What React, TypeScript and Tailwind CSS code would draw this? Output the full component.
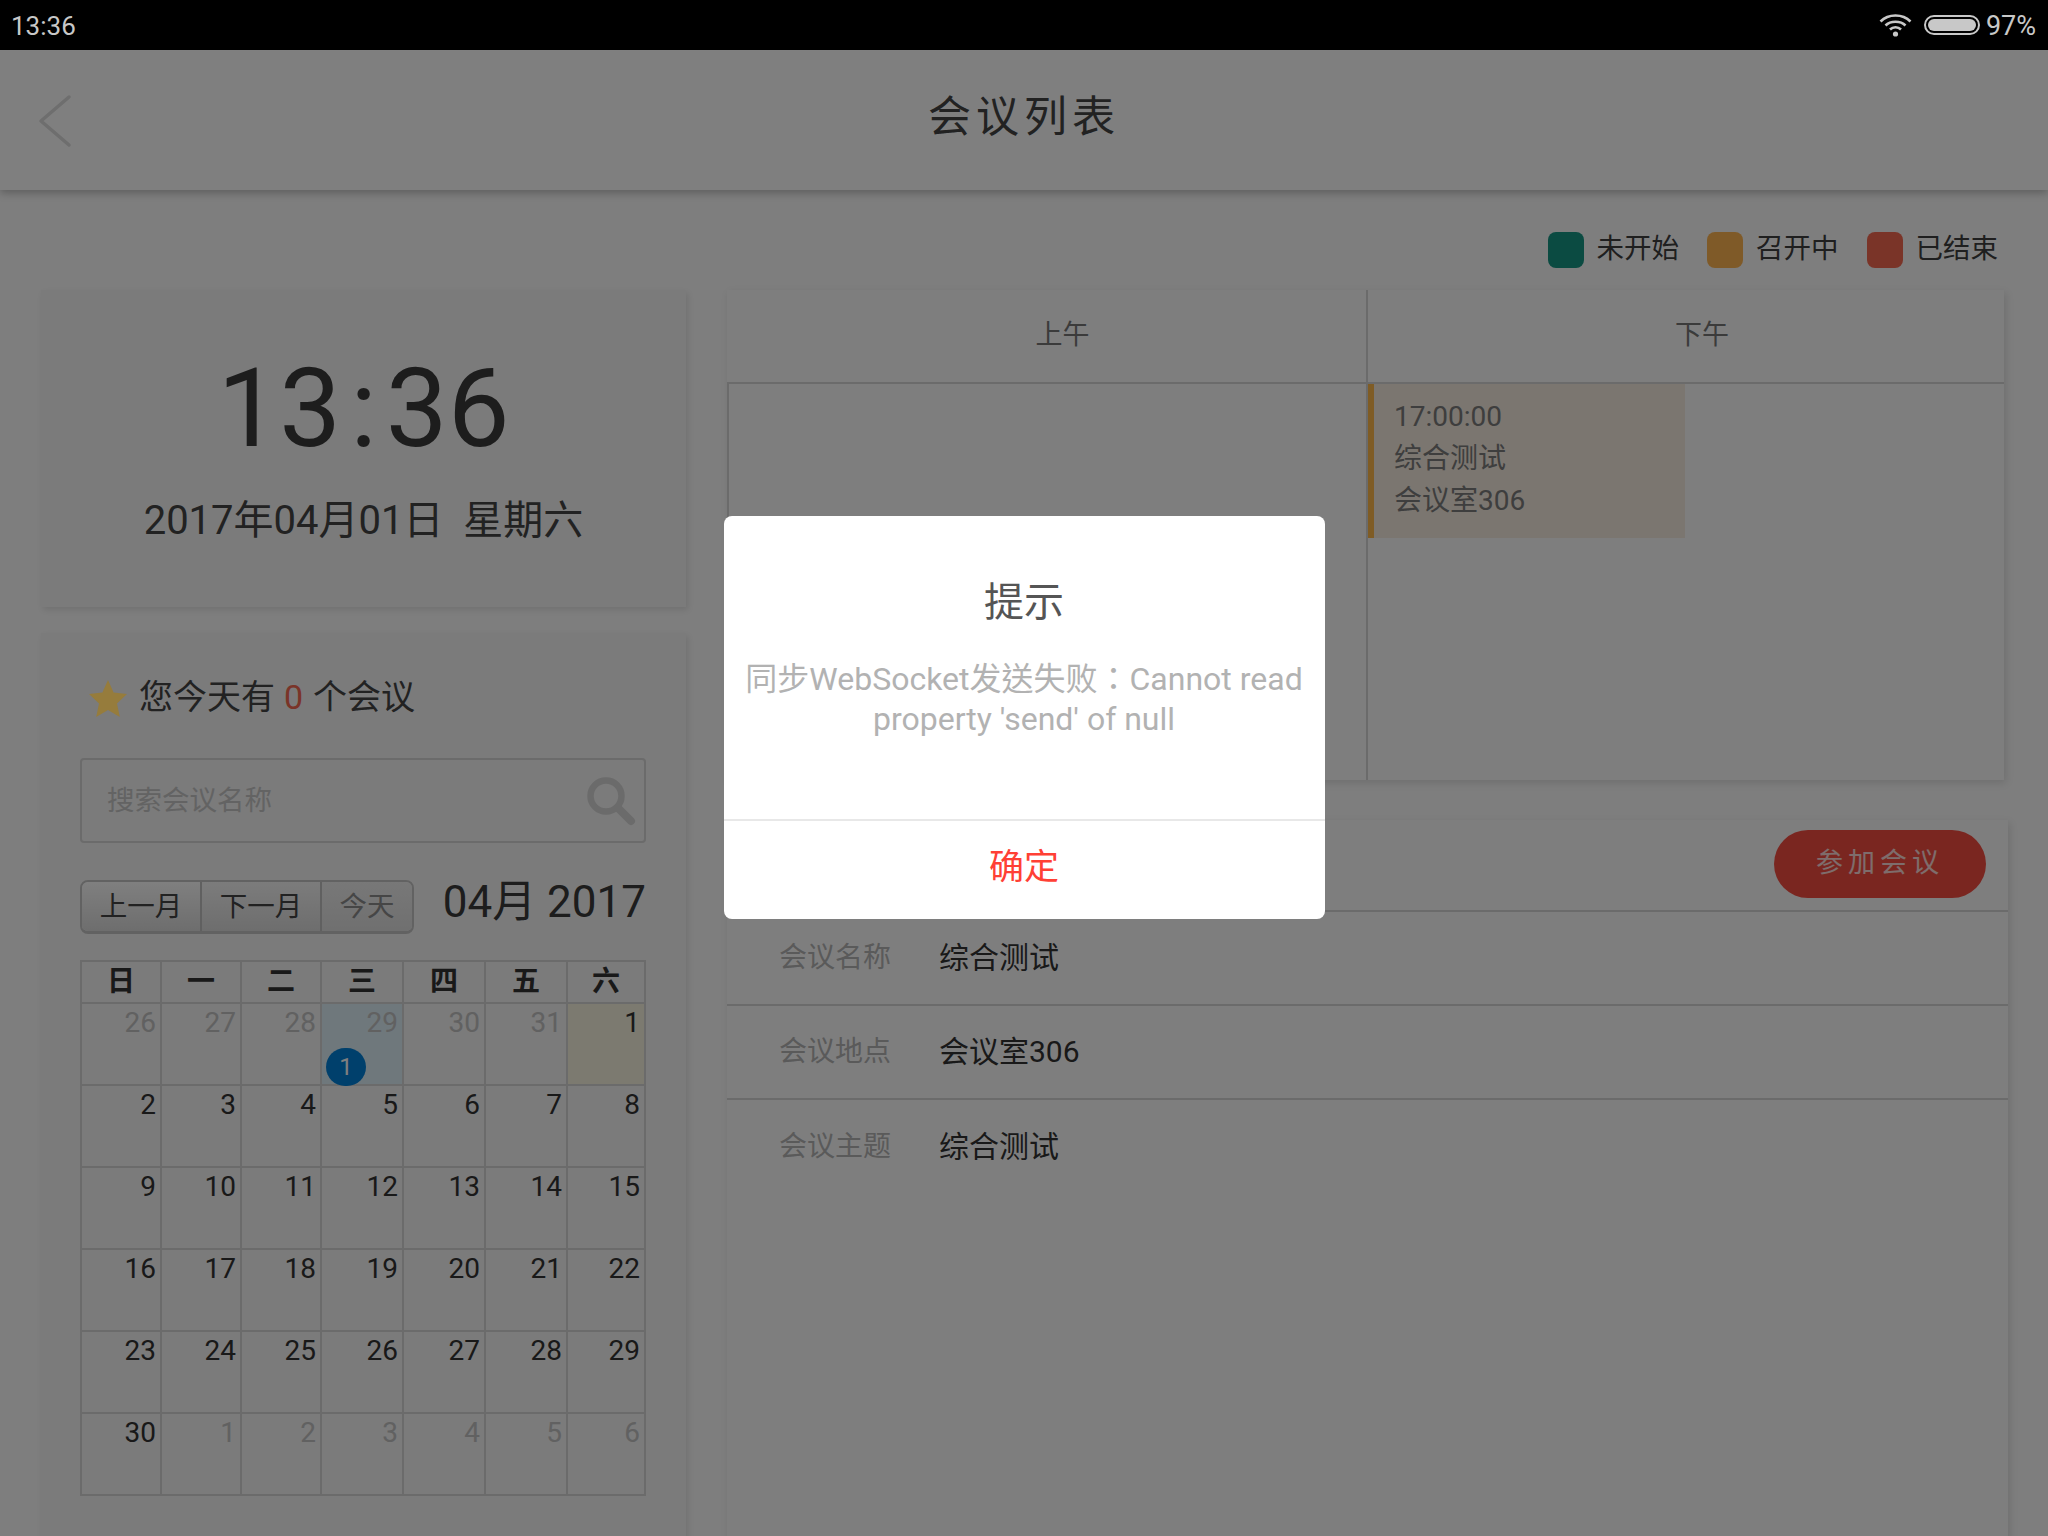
const prevDays = ['26', '27', '28', '29', '30', '31']
const colWidths = ['w-[80px]', 'w-[80px]', 'w-[80px]', 'w-[82px]', 'w-[82px]', 'w-[82px]', 'w-[78px]']
const weekDays = ['日', '一', '二', '三', '四', '五', '六']

const weeks: { label: number; muted?: boolean; bg?: string; badge?: boolean }[][] = [
  [
    ...prevDays.map((d, i) => ({
      label: Number(d),
      muted: true,
      bg: i === 3 ? 'bg-[#dff0f8]' : undefined,
      badge: i === 3,
    })),
    { label: 1, bg: 'bg-[#f8f4e0]' },
  ],
  [2, 3, 4, 5, 6, 7, 8].map((n) => ({ label: n })),
  [9, 10, 11, 12, 13, 14, 15].map((n) => ({ label: n })),
  [16, 17, 18, 19, 20, 21, 22].map((n) => ({ label: n })),
  [23, 24, 25, 26, 27, 28, 29].map((n) => ({ label: n })),
  [
    { label: 30 },
    ...[1, 2, 3, 4, 5, 6].map((n) => ({ label: n, muted: true })),
  ],
]

function StatusBar() {
  return (
    <div className="relative z-20 h-[50px] shrink-0 bg-black flex items-center justify-between pl-[11px] pr-[12px] text-[#c8c8c8]">
      <span className="mt-[2px] text-[26px]">13:36</span>
      <div className="flex items-center">
        <svg width="33" height="24" viewBox="0 0 33 24" fill="none" stroke="#c8c8c8" strokeWidth="2.6">
          <path d="M1.5 8.5C9.5 0.5 23.5 0.5 31.5 8.5" />
          <path d="M6.5 12.5C11.5 7.5 21.5 7.5 26.5 12.5" />
          <path d="M11 16.5C14 13.5 19 13.5 22 16.5" />
          <circle cx="16.5" cy="21" r="2.6" fill="#c8c8c8" stroke="none" />
        </svg>
        <div className="ml-3 w-14 h-5 rounded-full border-2 border-[#c8c8c8] p-[2px]">
          <div className="w-full h-full rounded-full bg-[#c8c8c8]" />
        </div>
        <span className="ml-[6px] mt-[2px] text-[27px]">97%</span>
      </div>
    </div>
  )
}

function Legend({ color, label }: { color: string; label: string }) {
  return (
    <div className="flex items-center gap-[13px]">
      <div className={`w-9 h-9 rounded-lg ${color}`} />
      <span className="text-[27.5px] leading-9 -mt-[3px] text-[#3e3e3e]">{label}</span>
    </div>
  )
}

function Calendar() {
  return (
    <div className="mt-[26px] w-[566px] border-t-2 border-l-2 border-[#d6d6d6]">
      <div className="flex h-[42px]">
        {weekDays.map((d, i) => (
          <div
            key={d}
            className={`${colWidths[i]} border-r-2 border-b-2 border-[#d6d6d6] flex items-center justify-center text-[28px] font-bold text-[#333]`}
          >
            {d}
          </div>
        ))}
      </div>
      {weeks.map((week, w) => (
        <div key={w} className="flex h-[82px]">
          {week.map((day, i) => (
            <div
              key={i}
              className={`${colWidths[i]} relative border-r-2 border-b-2 border-[#d6d6d6] pr-[4px] text-right text-[28px] leading-[38px] ${day.bg ?? ''} ${day.muted ? 'text-[#c2c2c2]' : 'text-[#333]'}`}
            >
              {day.label}
              {day.badge && (
                <div className="absolute left-[4px] top-[44px] w-10 h-[38px] rounded-full bg-[#0180d8] flex items-center justify-center text-[24px] leading-none text-white">
                  1
                </div>
              )}
            </div>
          ))}
        </div>
      ))}
    </div>
  )
}

function InfoRow({ label, value, last }: { label: string; value: string; last?: boolean }) {
  return (
    <div className={`h-[94px] flex items-center pl-[52px] ${last ? '' : 'border-b-2 border-[#d6d6d6]'}`}>
      <span className="w-[160px] pb-[1px] text-[28px] text-[#b4b4b4]">{label}</span>
      <span className="pb-[2px] text-[30px] text-[#333]">{value}</span>
    </div>
  )
}

export default function App() {
  return (
    <div className="relative w-[2048px] h-[1536px] overflow-hidden flex flex-col bg-[#fcfcfc] font-['Roboto','Noto_Sans_CJK_SC',sans-serif]">
      <StatusBar />

      {/* Header */}
      <div className="relative h-[140px] shrink-0 bg-white shadow-[0_3px_8px_rgba(0,0,0,0.25)] flex items-center justify-center">
        <svg className="absolute left-[38px] top-[44px]" width="34" height="54" viewBox="0 0 34 54" fill="none" stroke="#dcdcdc" strokeWidth="3.5" strokeLinecap="round" strokeLinejoin="round">
          <path d="M31 3L3 27L31 51" />
        </svg>
        <h1 className="text-[43px] leading-none tracking-[5px] -mt-[5px] text-[#444]">会议列表</h1>
      </div>

      {/* Legend */}
      <div className="h-[100px] shrink-0 flex items-center justify-end gap-[28px] pt-5 pr-[50px]">
        <Legend color="bg-[#169684]" label="未开始" />
        <Legend color="bg-[#ffb450]" label="召开中" />
        <Legend color="bg-[#f46850]" label="已结束" />
      </div>

      <div className="flex gap-[41px] pl-[41px]">
        {/* Left column */}
        <div className="w-[645px] shrink-0 flex flex-col gap-[26px]">
          <div className="h-[317px] bg-[#f6f6f6] shadow-[2px_3px_6px_rgba(0,0,0,0.1)] flex flex-col items-center">
            <div className="mt-[64px] flex text-[110px] leading-[110px] text-[#3a3a3a]">
              <span>13</span>
              <span className="mx-[9px]">:</span>
              <span>36</span>
            </div>
            <div className="mt-[32px] text-[40px] leading-[50px] whitespace-pre text-[#444]">2017年04月01日  星期六</div>
          </div>

          <div className="h-[920px] bg-[#f6f6f6] shadow-[2px_3px_6px_rgba(0,0,0,0.1)] pl-[39px]">
            <div className="flex items-center h-[44px] mt-[42px] text-[34px] text-[#444]">
              <svg className="relative z-20 ml-[9px] mr-[12px] mt-[2px]" width="38" height="37" viewBox="0 0 38 37">
                <path d="M19 0L24.6 12.6L38 14.1L28 23.4L30.8 37L19 30.1L7.2 37L10 23.4L0 14.1L13.4 12.6Z" fill="#967c3c" />
              </svg>
              <span>您今天有</span>
              <span className="ml-[9px] mr-[10px] text-[#f46850]">0</span>
              <span>个会议</span>
            </div>

            {/* Search */}
            <div className="mt-[39px] w-[566px] h-[85px] rounded border-2 border-[#d6d6d6] flex items-center justify-between pl-[25px] pr-[8px]">
              <span className="text-[27.5px] text-[#c6c6c6]">搜索会议名称</span>
              <svg width="50" height="50" viewBox="0 0 50 50" fill="none" stroke="#d6d6d6" strokeLinecap="round">
                <circle cx="20" cy="20" r="15.5" strokeWidth="6.5" />
                <path d="M32 32L45 45" strokeWidth="8" />
              </svg>
            </div>

            {/* Month toolbar */}
            <div className="mt-[37px] w-[566px] h-[54px] flex items-center justify-between">
              <div className="flex h-[54px] rounded-lg border-2 border-b-[3px] border-[#c4c4c4] overflow-hidden text-[27.5px]">
                <div className="w-[120px] flex items-center justify-center border-r-2 border-[#c0c0c0] bg-gradient-to-b from-white to-[#dcdcdc] text-[#444]">上一月</div>
                <div className="w-[120px] flex items-center justify-center border-r-2 border-[#c0c0c0] bg-gradient-to-b from-[#f8f8f8] to-[#dcdcdc] text-[#444]">下一月</div>
                <div className="w-[90px] flex items-center justify-center bg-gradient-to-b from-[#f0f0f0] to-[#e0e0e0] text-[#8c8c8c]">今天</div>
              </div>
              <span className="text-[44px] leading-none -mt-[10px] text-[#3a3a3a]">04月 2017</span>
            </div>

            <Calendar />
          </div>
        </div>

        {/* Right column */}
        <div className="flex-1 flex flex-col gap-[40px]">
          <div className="w-[1277px] h-[490px] bg-[#fdfdfd] shadow-[2px_3px_8px_rgba(0,0,0,0.12)] flex flex-col">
            <div className="h-[94px] shrink-0 flex border-b-2 border-[#d6d6d6] text-[27px] text-[#777]">
              <div className="w-[641px] pl-[32px] pb-[2px] border-r-2 border-[#d6d6d6] flex items-center justify-center">上午</div>
              <div className="flex-1 pl-[32px] pb-[2px] flex items-center justify-center">下午</div>
            </div>
            <div className="flex-1 flex">
              <div className="w-[641px] border-r-2 border-l-2 border-[#d6d6d6]" />
              <div className="flex-1">
                <div className="w-[317px] h-[154px] border-l-[6px] border-[#ffb84a] bg-[#f6ece0] pl-[20px] pt-[12px] text-[28px] leading-[42px] text-[#7c7c7c]">
                  <div>17:00:00</div>
                  <div>综合测试</div>
                  <div>会议室306</div>
                </div>
              </div>
            </div>
          </div>

          <div className="w-[1281px] h-[720px] bg-[#fdfdfd] shadow-[2px_3px_8px_rgba(0,0,0,0.12)]">
            <div className="h-[92px] border-b-2 border-[#d6d6d6] flex items-start justify-end pt-[10px] pr-[22px]">
              <div className="w-[212px] h-[68px] pb-[2px] rounded-full bg-[#f44c40] flex items-center justify-center text-[27px] tracking-[5px] text-white/80">参加会议</div>
            </div>
            <InfoRow label="会议名称" value="综合测试" />
            <InfoRow label="会议地点" value="会议室306" />
            <InfoRow label="会议主题" value="综合测试" last />
          </div>
        </div>
      </div>

      {/* Dialog */}
      <div className="absolute inset-x-0 top-[50px] bottom-0 z-10 bg-black/50 flex justify-center items-start pt-[466px]">
        <div className="w-[601px] h-[403px] rounded-lg bg-white flex flex-col">
          <div className="h-[305px] shrink-0 flex flex-col items-center px-4 text-center border-b-2 border-[#e8e8e8]">
            <div className="mt-[62px] text-[40px] leading-[50px] text-[#555]">提示</div>
            <div className="mt-[31px] text-[32px] leading-[40px] text-[#b2b2b2] font-['Roboto','Noto_Sans_CJK_TC',sans-serif]">
              同步WebSocket发送失败：Cannot read property 'send' of null
            </div>
          </div>
          <div className="flex-1 flex items-center justify-center pb-[4px] text-[35px] text-[#ff4035]">确定</div>
        </div>
      </div>
    </div>
  )
}
